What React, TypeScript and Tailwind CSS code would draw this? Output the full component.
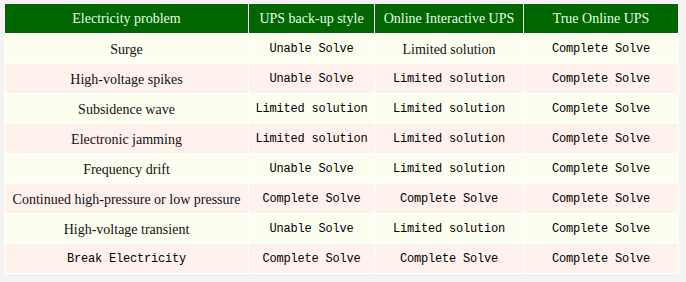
import React from "react";

type Cell = { t: string; m: boolean };

const rows: Cell[][] = [
  [
    { t: "Surge", m: false },
    { t: "Unable Solve", m: true },
    { t: "Limited solution", m: false },
    { t: "Complete Solve", m: true },
  ],
  [
    { t: "High-voltage spikes", m: false },
    { t: "Unable Solve", m: true },
    { t: "Limited solution", m: true },
    { t: "Complete Solve", m: true },
  ],
  [
    { t: "Subsidence wave", m: false },
    { t: "Limited solution", m: true },
    { t: "Limited solution", m: true },
    { t: "Complete Solve", m: true },
  ],
  [
    { t: "Electronic jamming", m: false },
    { t: "Limited solution", m: true },
    { t: "Limited solution", m: true },
    { t: "Complete Solve", m: true },
  ],
  [
    { t: "Frequency drift", m: false },
    { t: "Unable Solve", m: true },
    { t: "Limited solution", m: true },
    { t: "Complete Solve", m: true },
  ],
  [
    { t: "Continued high-pressure or low pressure", m: false },
    { t: "Complete Solve", m: true },
    { t: "Complete Solve", m: true },
    { t: "Complete Solve", m: true },
  ],
  [
    { t: "High-voltage transient", m: false },
    { t: "Unable Solve", m: true },
    { t: "Limited solution", m: true },
    { t: "Complete Solve", m: true },
  ],
  [
    { t: "Break Electricity", m: true },
    { t: "Complete Solve", m: true },
    { t: "Complete Solve", m: true },
    { t: "Complete Solve", m: true },
  ],
];

const headers = [
  "Electricity problem",
  "UPS back-up style",
  "Online Interactive UPS",
  "True Online UPS",
];

export default function App() {
  return (
    <div className="min-h-[282px] w-[686px] bg-[#f3f3f3] pl-[4px] pt-[3px]">
      <div className="grid w-[675px] grid-cols-[243px_125px_148px_154px] gap-px border border-white bg-white">
        {headers.map((h) => (
          <div
            key={h}
            className="flex h-[29px] items-center justify-center bg-[#006600] text-[14px] text-[#e6ffe6] [font-family:'Liberation_Serif',serif]"
          >
            {h}
          </div>
        ))}
        {rows.map((r, i) =>
          r.map((c, j) => (
            <div
              key={`${i}-${j}`}
              className={`flex h-[29px] items-center justify-center pt-px ${
                i % 2 === 0 ? "bg-[#fcfff0]" : "bg-[#fff2ec]"
              } ${
                c.m
                  ? "text-[12px] tracking-[-0.2px] text-black [font-family:'Liberation_Mono',monospace]"
                  : "text-[14px] text-[#111] [font-family:'Liberation_Serif',serif]"
              }`}
            >
              {c.t}
            </div>
          ))
        )}
      </div>
    </div>
  );
}
